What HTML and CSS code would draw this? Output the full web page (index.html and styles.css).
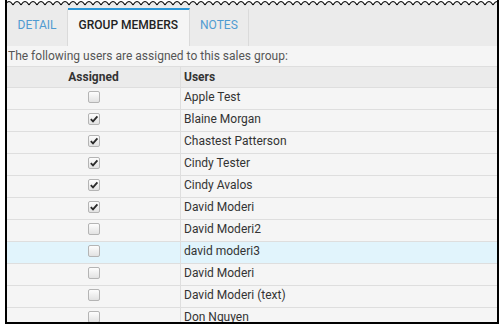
FILE: index.html
```html
<!DOCTYPE html>
<html lang="en">
<head>
  <meta charset="UTF-8">
  <title>Sales Group - Group Members</title>
  <link rel="stylesheet" href="styles.css">
</head>
<body>
  <div class="frame">
    <svg class="torn" width="490" height="8" viewBox="0 0 490 8">
      <defs>
        <pattern id="wave" width="8" height="8" patternUnits="userSpaceOnUse" x="-2">
          <path d="M0 0 H8 V5 Q4 -2 0 5 Z" fill="#fff"/>
          <path d="M0 5 Q4 -2 8 5" fill="none" stroke="#000" stroke-width="1.1"/>
        </pattern>
      </defs>
      <rect width="490" height="8" fill="url(#wave)"/>
    </svg>
    <div class="panel">
      <div class="tabs">
        <div class="tab">Detail</div>
        <div class="tab active">Group Members</div>
        <div class="tab">Notes</div>
      </div>
      <div class="intro">The following users are assigned to this sales group:</div>
      <div class="row head">
        <div class="cell assigned">Assigned</div>
        <div class="cell user">Users</div>
      </div>
      <div class="row">
        <div class="cell assigned"><span class="check"></span></div>
        <div class="cell user">Apple Test</div>
      </div>
      <div class="row">
        <div class="cell assigned"><span class="check on"><svg width="10" height="10" viewBox="0 0 10 10"><path d="M1.8 5.2 L4 7.4 L8.4 2.4" fill="none" stroke="#2a2a2a" stroke-width="1.8"/></svg></span></div>
        <div class="cell user">Blaine Morgan</div>
      </div>
      <div class="row">
        <div class="cell assigned"><span class="check on"><svg width="10" height="10" viewBox="0 0 10 10"><path d="M1.8 5.2 L4 7.4 L8.4 2.4" fill="none" stroke="#2a2a2a" stroke-width="1.8"/></svg></span></div>
        <div class="cell user">Chastest Patterson</div>
      </div>
      <div class="row">
        <div class="cell assigned"><span class="check on"><svg width="10" height="10" viewBox="0 0 10 10"><path d="M1.8 5.2 L4 7.4 L8.4 2.4" fill="none" stroke="#2a2a2a" stroke-width="1.8"/></svg></span></div>
        <div class="cell user">Cindy Tester</div>
      </div>
      <div class="row">
        <div class="cell assigned"><span class="check on"><svg width="10" height="10" viewBox="0 0 10 10"><path d="M1.8 5.2 L4 7.4 L8.4 2.4" fill="none" stroke="#2a2a2a" stroke-width="1.8"/></svg></span></div>
        <div class="cell user">Cindy Avalos</div>
      </div>
      <div class="row">
        <div class="cell assigned"><span class="check on"><svg width="10" height="10" viewBox="0 0 10 10"><path d="M1.8 5.2 L4 7.4 L8.4 2.4" fill="none" stroke="#2a2a2a" stroke-width="1.8"/></svg></span></div>
        <div class="cell user">David Moderi</div>
      </div>
      <div class="row">
        <div class="cell assigned"><span class="check"></span></div>
        <div class="cell user">David Moderi2</div>
      </div>
      <div class="row hover">
        <div class="cell assigned"><span class="check"></span></div>
        <div class="cell user">david moderi3</div>
      </div>
      <div class="row">
        <div class="cell assigned"><span class="check"></span></div>
        <div class="cell user">David Moderi</div>
      </div>
      <div class="row">
        <div class="cell assigned"><span class="check"></span></div>
        <div class="cell user">David Moderi (text)</div>
      </div>
      <div class="row">
        <div class="cell assigned"><span class="check"></span></div>
        <div class="cell user">Don Nguyen</div>
      </div>
    </div>
  </div>
</body>
</html>
```

FILE: styles.css
```css
* {
  box-sizing: border-box;
}
body {
  margin: 0;
  padding: 0;
  background: #fff;
  font-family: Roboto, "Liberation Sans", Arial, sans-serif;
  font-size: 12px;
  color: #333;
}
.frame {
  margin-left: 5px;
  width: 494px;
  height: 324px;
  border: 2px solid #000;
  border-top: none;
  background: #ebebeb;
}
.torn {
  display: block;
}
.panel {
  height: 314px;
  overflow: hidden;
}
.tabs {
  display: flex;
  height: 38px;
  background: #ebebeb;
}
.tab {
  padding: 5px 10.5px 0;
  border-top: 2px solid transparent;
  border-right: 1px solid #dadada;
  line-height: 20px;
  color: #4f9bd1;
  text-transform: uppercase;
}
.tab.active {
  background: #f5f5f5;
  border-top-color: #2b96d6;
  color: #222;
  font-weight: 500;
}
.intro {
  height: 21px;
  padding-left: 1px;
  line-height: 20px;
  background: #f5f5f5;
  border-bottom: 1px solid #dedede;
  color: #555;
}
.row {
  display: grid;
  grid-template-columns: 174px 1fr;
  height: 22px;
  background: #f5f5f5;
  border-bottom: 1px solid #dedede;
  line-height: 18px;
}
.row.head {
  height: 21px;
  background: #ebebeb;
  line-height: 20px;
  font-weight: bold;
  color: #333;
}
.row.hover {
  background: #e1f4fc;
}
.cell.assigned {
  display: flex;
  justify-content: center;
  align-items: flex-start;
  border-right: 1px solid #dedede;
}
.row:not(.head) .cell.assigned {
  padding-top: 3px;
}
.cell.user {
  padding-left: 3px;
}
.check {
  display: flex;
  align-items: center;
  justify-content: center;
  width: 12px;
  height: 12px;
  border: 1px solid #b4b4b4;
  border-radius: 2px;
  background: linear-gradient(#fdfdfd, #e2e2e2);
}
.check svg {
  display: block;
}
```
